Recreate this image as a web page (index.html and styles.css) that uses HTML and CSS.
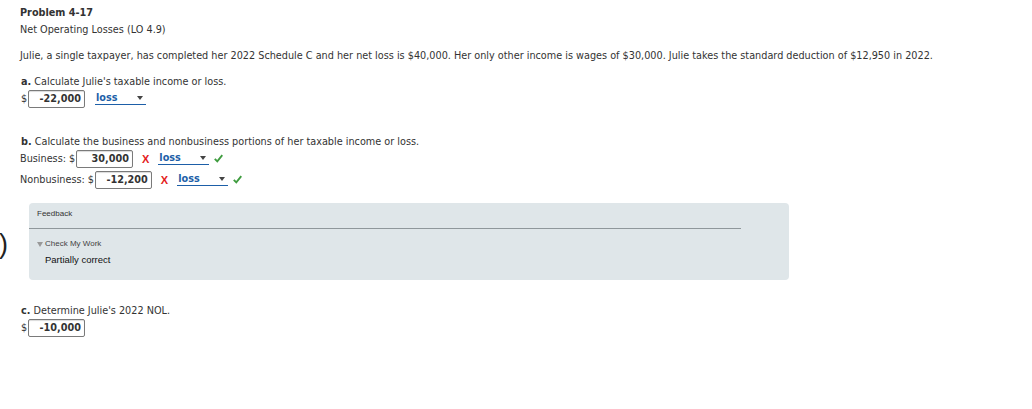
FILE: index.html
```html
<!DOCTYPE html>
<html>
  <head>
    <meta charset="UTF-8" />
    <title>Problem 4-17</title>
    <link rel="stylesheet" href="styles.css">
  </head>
  <body>
    <span class="edge-paren">)</span>
    <div class="page">
      <h1 class="problem-title">Problem 4-17</h1>
      <div class="problem-subtitle">Net Operating Losses (LO 4.9)</div>

      <p class="problem-text">
        Julie, a single taxpayer, has completed her 2022 Schedule C and her net loss is $40,000. Her only other income is wages of $30,000. Julie takes the standard deduction of $12,950 in 2022.
      </p>

      <div class="part part-a">
        <div class="part-label"><strong>a.</strong> Calculate Julie's taxable income or loss.</div>
        <div class="answer-row">
          <span class="dollar">$</span>
          <span class="answer-box">-22,000</span>
          <span class="select-box">loss<span class="arrow"></span></span>
        </div>
      </div>

      <div class="part part-b">
        <div class="part-label"><strong>b.</strong> Calculate the business and nonbusiness portions of her taxable income or loss.</div>
        <div class="answer-row">
          <span class="row-label">Business:</span>
          <span class="dollar">$</span>
          <span class="answer-box">30,000</span>
          <span class="mark-x">X</span>
          <span class="select-box">loss<span class="arrow"></span></span>
          <svg class="mark-ok" width="9" height="9" viewBox="0 0 9 9">
            <path d="M0.8 4.8 L3.3 7.4 L8.3 1.2" fill="none" stroke="#3f9c3f" stroke-width="1.9" />
          </svg>
        </div>
        <div class="answer-row">
          <span class="row-label">Nonbusiness:</span>
          <span class="dollar">$</span>
          <span class="answer-box">-12,200</span>
          <span class="mark-x">X</span>
          <span class="select-box">loss<span class="arrow"></span></span>
          <svg class="mark-ok" width="9" height="9" viewBox="0 0 9 9">
            <path d="M0.8 4.8 L3.3 7.4 L8.3 1.2" fill="none" stroke="#3f9c3f" stroke-width="1.9" />
          </svg>
        </div>
      </div>

      <div class="feedback">
        <div class="feedback-title">Feedback</div>
        <div class="feedback-rule"></div>
        <div class="check-work"><span class="tri"></span>Check My Work</div>
        <div class="feedback-result">Partially correct</div>
      </div>

      <div class="part part-c">
        <div class="part-label"><strong>c.</strong> Determine Julie's 2022 NOL.</div>
        <div class="answer-row">
          <span class="dollar">$</span>
          <span class="answer-box">-10,000</span>
        </div>
      </div>
    </div>
  </body>
</html>
```

FILE: styles.css
```css
* {
  margin: 0;
  padding: 0;
  box-sizing: border-box;
}

body {
  font-family: "DejaVu Sans", Verdana, sans-serif;
  font-size: 9.7px;
  color: #333;
  background: white;
  position: relative;
  min-height: 409px;
}

.edge-paren {
  position: absolute;
  left: -1px;
  top: 229px;
  font-family: "Liberation Sans", Arial, sans-serif;
  font-size: 27px;
  font-weight: 300;
  color: #222;
}

.page {
  padding: 6px 20px 0 20px;
}

.problem-title {
  font-size: 9.7px;
  font-weight: bold;
  line-height: 14px;
}

.problem-subtitle {
  margin-top: 3px;
  line-height: 14px;
}

.problem-text {
  margin-top: 12px;
  line-height: 14px;
}

.part-a {
  margin-top: 12px;
}

.part-label {
  padding-left: 1px;
  line-height: 14px;
}

.answer-row {
  display: flex;
  align-items: center;
  height: 19px;
}

.dollar {
  width: 7px;
  margin-left: 1px;
}

.row-label {
  margin-right: 2px;
}

.answer-box {
  display: inline-block;
  height: 18px;
  line-height: 16px;
  padding: 0 3px 0 6px;
  border: 1px solid #7a7a7a;
  border-radius: 2px;
  box-shadow: inset 0 1px 1px rgba(0, 0, 0, 0.15);
  font-weight: bold;
  text-align: right;
  min-width: 57px;
}

.select-box {
  position: relative;
  display: inline-block;
  width: 51px;
  height: 13px;
  margin-left: 10px;
  padding-left: 1px;
  line-height: 12px;
  color: #1d5fa8;
  font-weight: bold;
  border-bottom: 1px solid #1d5fa8;
}

.mark-x + .select-box {
  margin-left: 9px;
}

.arrow {
  position: absolute;
  right: 3px;
  top: 4px;
  border-left: 3px solid transparent;
  border-right: 3px solid transparent;
  border-top: 4px solid #444;
}

.mark-x {
  margin-left: 9px;
  color: #e41b1b;
  font-family: "Liberation Sans", Arial, sans-serif;
  font-weight: bold;
  font-size: 11px;
}

.mark-ok {
  margin-left: 5px;
}

.part-b {
  margin-top: 27px;
}

.part-b .answer-row + .answer-row {
  margin-top: 2px;
}

.feedback {
  margin: 14px 0 0 9px;
  width: 760px;
  height: 77px;
  background: #dfe6e9;
  border-radius: 4px;
  padding: 6px 48px 0 8px;
  font-family: "Liberation Sans", Arial, sans-serif;
}

.feedback-title {
  font-size: 8px;
  line-height: 10px;
  color: #333;
}

.feedback-rule {
  margin: 9px 0 0 -8px;
  height: 1px;
  background: #8f979b;
}

.check-work {
  margin-top: 10px;
  font-size: 8px;
  line-height: 10px;
  color: #444;
  display: flex;
  align-items: center;
}

.tri {
  display: inline-block;
  margin-right: 2px;
  border-left: 3px solid transparent;
  border-right: 3px solid transparent;
  border-top: 5px solid #999;
}

.feedback-result {
  margin-top: 5px;
  padding-left: 8px;
  font-size: 9.5px;
  line-height: 12px;
  color: #111;
}

.part-c {
  margin-top: 24px;
}
```
